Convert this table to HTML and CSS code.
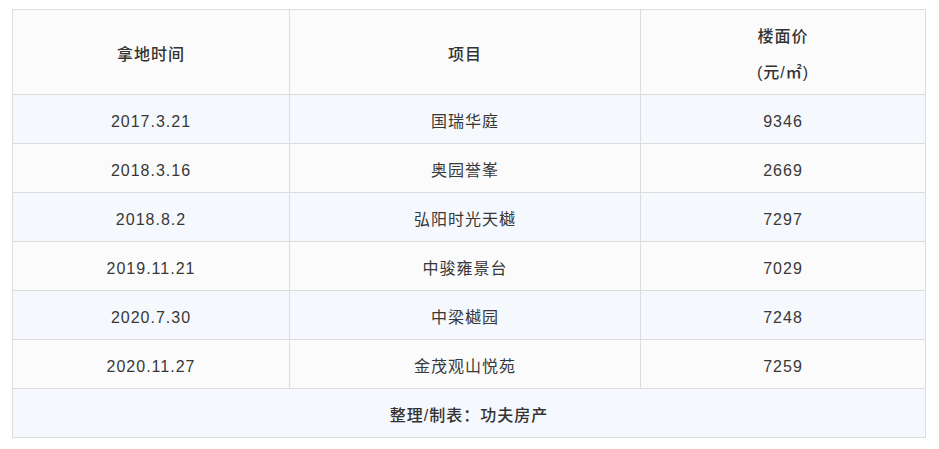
FILE: index.html
```html
<!DOCTYPE html>
<html lang="zh">
<head>
<meta charset="utf-8">
<link rel="stylesheet" href="styles.css">
</head>
<body>
<div class="wrap">
<table class="land">
  <colgroup>
    <col class="c1"><col class="c2"><col class="c3">
  </colgroup>
  <thead>
    <tr class="head">
      <th>拿地时间</th>
      <th>项目</th>
      <th>楼面价<br>(元/㎡)</th>
    </tr>
  </thead>
  <tbody>
    <tr class="alt"><td>2017.3.21</td><td>国瑞华庭</td><td>9346</td></tr>
    <tr><td>2018.3.16</td><td>奥园誉峯</td><td>2669</td></tr>
    <tr class="alt"><td>2018.8.2</td><td>弘阳时光天樾</td><td>7297</td></tr>
    <tr><td>2019.11.21</td><td>中骏雍景台</td><td>7029</td></tr>
    <tr class="alt"><td>2020.7.30</td><td>中梁樾园</td><td>7248</td></tr>
    <tr><td>2020.11.27</td><td>金茂观山悦苑</td><td>7259</td></tr>
    <tr class="alt foot"><td colspan="3">整理/制表：功夫房产</td></tr>
  </tbody>
</table>
</div>
</body>
</html>
```
FILE: styles.css
```css
html, body {
  margin: 0;
  padding: 0;
  background: #ffffff;
}
.wrap {
  padding: 9px 0 0 12px;
}
.land {
  border-collapse: collapse;
  width: 913px;
  table-layout: fixed;
  font-family: "Liberation Sans", "Noto Sans CJK SC", sans-serif;
  font-size: 16px;
  letter-spacing: 1px;
  color: #383838;
}
.c1 { width: 277px; }
.c2 { width: 351px; }
.c3 { width: 285px; }
.land th,
.land td {
  border: 1px solid #dcdcdc;
  text-align: center;
  vertical-align: middle;
  line-height: 36px;
  padding: 9px 0 3px;
}
.land th {
  font-weight: 500;
  color: #333333;
}
.head {
  background: #fbfbfb;
}
.land tr {
  background: #fbfbfb;
}
.land tr.alt {
  background: #f5f8fd;
}
.foot td {
  font-weight: 500;
  color: #333333;
}
```
